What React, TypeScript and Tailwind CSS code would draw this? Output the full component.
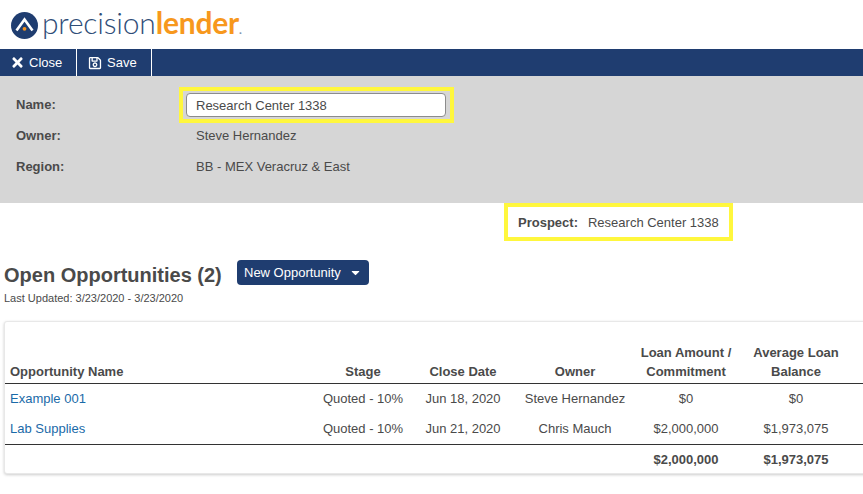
import { FaTimes, FaRegSave, FaCaretDown } from 'react-icons/fa';

function Logo() {
  return (
    <div className="flex items-center h-[49px] pl-[11px]">
      <svg width="27" height="27" viewBox="0 0 27 27" className="mt-[1px]">
        <circle cx="13.5" cy="13.5" r="13.5" fill="#1f3d70" />
        <path d="M5.5 18.5 L13.5 7.5 L21.5 18.5" fill="none" stroke="#fff" strokeWidth="2.6" />
        <circle cx="13.5" cy="16.8" r="1.9" fill="#f7941d" />
      </svg>
      <div className="ml-[4px] mb-[6px] text-[30px] leading-none tracking-[-0.2px] font-['Lato',sans-serif]">
        <span className="font-light text-[#2f4d78]">precision</span>
        <span className="font-bold text-[#f7981d]">lender</span>
        <span className="font-bold text-[#7f93ad] text-[12px]">.</span>
      </div>
    </div>
  );
}

const rows = [
  { name: 'Example 001', stage: 'Quoted - 10%', date: 'Jun 18, 2020', owner: 'Steve Hernandez', loan: '$0', avg: '$0' },
  { name: 'Lab Supplies', stage: 'Quoted - 10%', date: 'Jun 21, 2020', owner: 'Chris Mauch', loan: '$2,000,000', avg: '$1,973,075' },
];

export default function App() {
  return (
    <div className="w-[863px] h-[494px] overflow-hidden bg-white text-[13px] text-[#4a4a4a] font-['Liberation_Sans',Arial,sans-serif]">
      <Logo />

      {/* Toolbar */}
      <div className="flex h-[27px] bg-[#1f3d70] text-white">
        <button className="flex items-center w-[77px] pl-[10px] border-r border-white">
          <FaTimes className="w-[15px] h-[15px]" />
          <span className="ml-[4px] mt-[1px]">Close</span>
        </button>
        <button className="flex items-center w-[75px] pl-[11px] border-r border-white">
          <FaRegSave className="w-[14px] h-[14px]" />
          <span className="ml-[5px] mt-[1px]">Save</span>
        </button>
      </div>

      {/* Details */}
      <div className="h-[127px] bg-[#d6d6d6] pl-[16px] pt-[13px]">
        <div className="flex items-center h-[31px]">
          <div className="w-[170px] font-bold">Name:</div>
          <div className="relative">
            <div className="absolute -left-[7px] -right-[8px] -top-[6px] -bottom-[6px] border-[4px] border-[#fff73d]"></div>
            <input
              readOnly
              value="Research Center 1338"
              className="relative block w-[260px] h-[24px] pl-[9px] pt-[1px] bg-white border border-[#8c8c8c] rounded-[4px] text-[#4a4a4a] outline-none"
            />
          </div>
        </div>
        <div className="flex items-center h-[31px]">
          <div className="w-[180px] font-bold">Owner:</div>
          <div>Steve Hernandez</div>
        </div>
        <div className="flex items-center h-[31px]">
          <div className="w-[180px] font-bold">Region:</div>
          <div>BB - MEX Veracruz &amp; East</div>
        </div>
      </div>

      {/* Prospect */}
      <div className="flex">
        <div className="flex items-center ml-[504px] w-[229px] h-[38px] pl-[10px] pt-[1px] border-[4px] border-[#fff73d] whitespace-nowrap">
          <span className="font-bold">Prospect:</span>
          <span className="ml-[10px]">Research Center 1338</span>
        </div>
      </div>

      {/* Heading */}
      <div className="flex items-center mt-[19px] pl-[4px] h-[25px]">
        <h2 className="w-[233px] text-[20px] font-bold leading-none mt-[5px]">Open Opportunities (2)</h2>
        <button className="flex items-center w-[132px] h-[25px] pl-[7px] pt-[1px] bg-[#1f3d70] rounded-[4px] text-white whitespace-nowrap">
          <span>New Opportunity</span>
          <FaCaretDown className="ml-[8px] w-[13px] h-[13px] -mt-[2px]" />
        </button>
      </div>
      <div className="pl-[4px] mt-[7px] text-[11px] leading-[13px]">Last Updated: 3/23/2020 - 3/23/2020</div>

      {/* Table */}
      <div className="ml-[4px] mt-[16px] w-[900px] h-[153px] bg-white border-[1px] border-[#e8e8e8] rounded-[3px] shadow-[0_1px_3px_rgba(0,0,0,0.2)]">
        <table className="table-fixed w-[890px] border-collapse">
          <colgroup>
            <col className="w-[314px]" />
            <col className="w-[88px]" />
            <col className="w-[112px]" />
            <col className="w-[112px]" />
            <col className="w-[110px]" />
            <col className="w-[110px]" />
            <col />
          </colgroup>
          <thead>
            <tr className="border-b border-[#333]">
              <th className="h-[61px] pl-[5px] pb-[2px] align-bottom text-left font-bold leading-[19px]">Opportunity Name</th>
              <th className="pb-[2px] align-bottom font-bold leading-[19px]">Stage</th>
              <th className="pb-[2px] align-bottom font-bold leading-[19px]">Close Date</th>
              <th className="pb-[2px] align-bottom font-bold leading-[19px]">Owner</th>
              <th className="pb-[2px] align-bottom font-bold leading-[19px]">Loan Amount /<br />Commitment</th>
              <th className="pb-[2px] align-bottom font-bold leading-[19px]">Average Loan<br />Balance</th>
              <th></th>
            </tr>
          </thead>
          <tbody>
            {rows.map((row, i) => (
              <tr key={i} className={i === 1 ? 'border-b border-[#333] h-[31px]' : 'h-[30px]'}>
                <td className="pl-[5px] text-[#1a6aa8]">{row.name}</td>
                <td className="text-center">{row.stage}</td>
                <td className="text-center">{row.date}</td>
                <td className="text-center">{row.owner}</td>
                <td className="text-center">{row.loan}</td>
                <td className="text-center">{row.avg}</td>
                <td></td>
              </tr>
            ))}
            <tr className="h-[30px] font-bold">
              <td colSpan={4}></td>
              <td className="text-center">$2,000,000</td>
              <td className="text-center">$1,973,075</td>
              <td></td>
            </tr>
          </tbody>
        </table>
      </div>
    </div>
  );
}
